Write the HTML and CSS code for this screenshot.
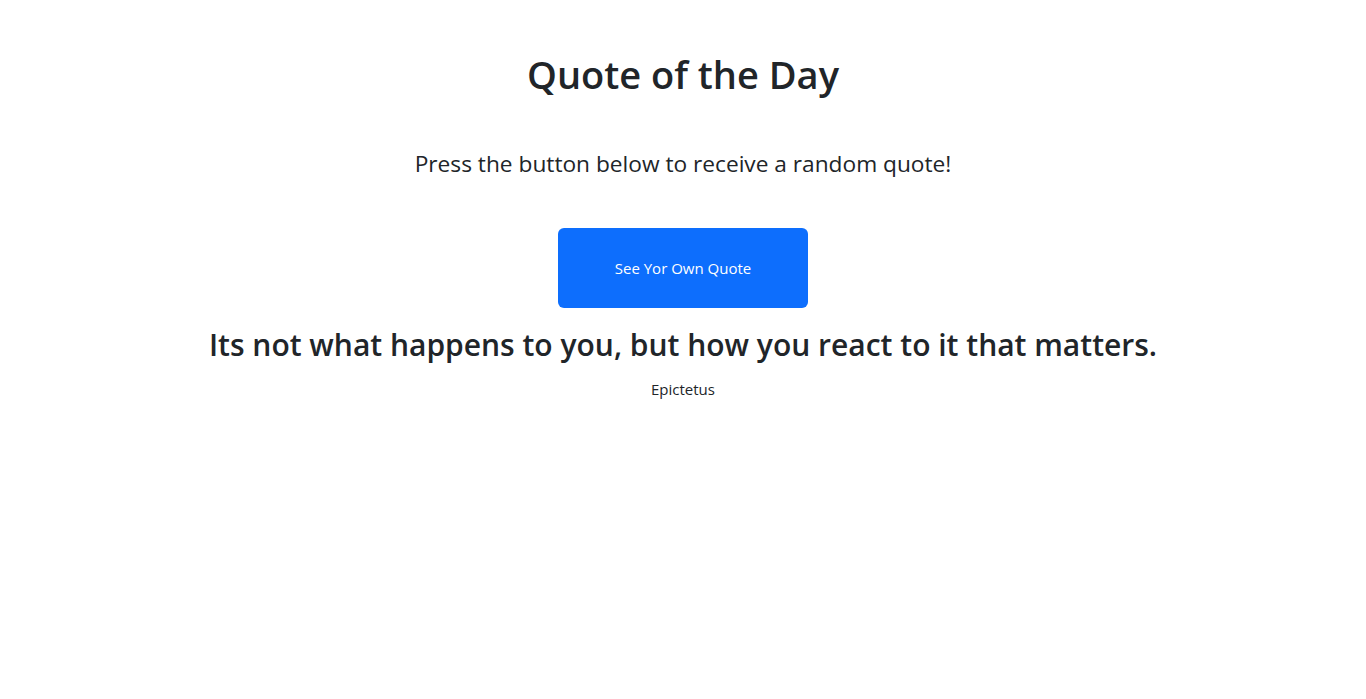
FILE: index.html
```html
<!DOCTYPE html>
<html lang="en">
<head>
<meta charset="utf-8">
<title>Quote of the Day</title>
<link rel="stylesheet" href="styles.css">
</head>
<body>
<main class="page">
  <h1 class="title">Quote of the Day</h1>
  <p class="lead">Press the button below to receive a random quote!</p>
  <button class="btn-quote" type="button">See Yor Own Quote</button>
  <h2 class="quote">Its not what happens to you, but how you react to it that matters.</h2>
  <p class="author">Epictetus</p>
</main>
</body>
</html>
```

FILE: styles.css
```css
html, body {
  margin: 0;
  padding: 0;
  background: #fff;
}
body {
  font-family: "Open Sans", "Noto Sans", sans-serif;
  color: #212529;
}
.page {
  display: flex;
  flex-direction: column;
  align-items: center;
  text-align: center;
}
.title {
  margin: 50px 0 0;
  font-size: 38px;
  line-height: 48px;
  font-weight: 600;
}
.lead {
  margin: 51px 0 0;
  font-size: 22.7px;
  line-height: 30px;
  font-weight: 400;
}
.btn-quote {
  margin-top: 49px;
  width: 250px;
  height: 80px;
  border: none;
  border-radius: 6px;
  background: #0d6efd;
  color: #fff;
  font-family: inherit;
  font-size: 15px;
  cursor: pointer;
}
.quote {
  margin: 17px 0 0;
  font-size: 30px;
  line-height: 40px;
  font-weight: 600;
}
.author {
  margin: 14px 0 0;
  font-size: 15px;
  line-height: 20px;
}
```
